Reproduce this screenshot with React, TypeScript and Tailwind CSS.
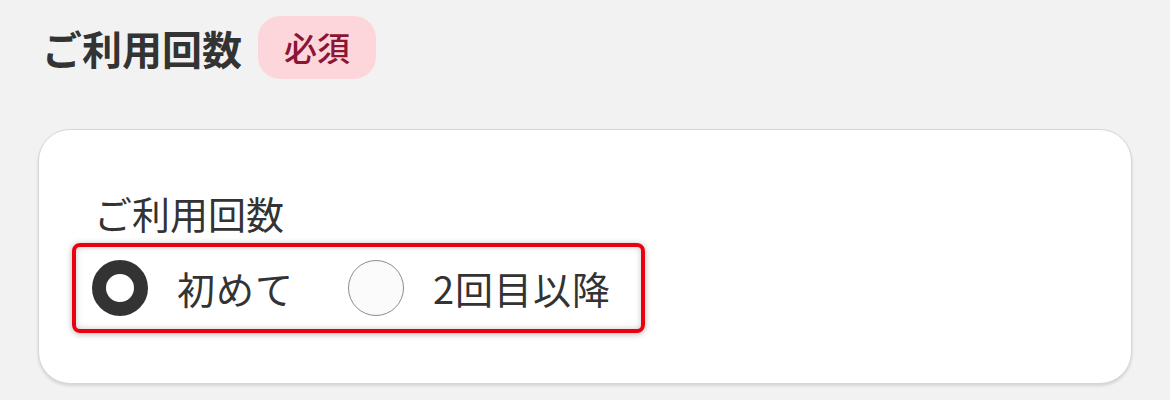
import React, { useState } from "react";

const jp = { fontFamily: '"Noto Sans CJK JP", "Noto Sans", sans-serif' };

const options = [
  { id: "first", label: "初めて" },
  { id: "repeat", label: "2回目以降" },
];

export default function App() {
  const [value, setValue] = useState("first");

  return (
    <div className="min-h-[400px] bg-[#f2f2f2] pt-4 text-[#333]" style={jp}>
      {/* Section heading */}
      <div className="flex h-[63px] items-center pl-[42px]">
        <h2 className="text-[40px] font-bold leading-none">ご利用回数</h2>
        <span className="ml-4 flex h-[63px] items-center rounded-[22px] bg-[#fdd6db] px-[26px] text-[33px] font-medium leading-none text-[#8b1535]">
          必須
        </span>
      </div>

      {/* Card */}
      <div className="mx-[38px] mt-[50px] h-[255px] rounded-[32px] border-[1.5px] border-[#d6d6d6] bg-white pl-[33px] pt-[64px] shadow-[0_2px_3px_rgba(0,0,0,0.12)]">
        <div className="ml-[22px] flex h-[38px] items-center text-[38px] leading-none">
          ご利用回数
        </div>

        <div className="mt-[11px] flex h-[90px] w-[573px] items-center rounded-[8px] border-4 border-[#ea0010] pl-4 shadow-[0_1px_6px_rgba(0,0,0,0.3),inset_0_0_6px_rgba(0,0,0,0.22)]">
          {options.map((o, i) => {
            const checked = value === o.id;
            return (
              <button
                key={o.id}
                onClick={() => setValue(o.id)}
                className={`flex items-center ${i > 0 ? "ml-[54px]" : ""}`}
              >
                <span
                  className={
                    checked
                      ? "h-[56px] w-[56px] rounded-full border-[14px] border-[#333] bg-white"
                      : "h-[56px] w-[56px] rounded-full border-[1.5px] border-[#8c8c8c] bg-[#fbfbfb]"
                  }
                />
                <span className="ml-[29px] text-[38px] leading-none tracking-[1px]">{o.label}</span>
              </button>
            );
          })}
        </div>
      </div>
    </div>
  );
}
